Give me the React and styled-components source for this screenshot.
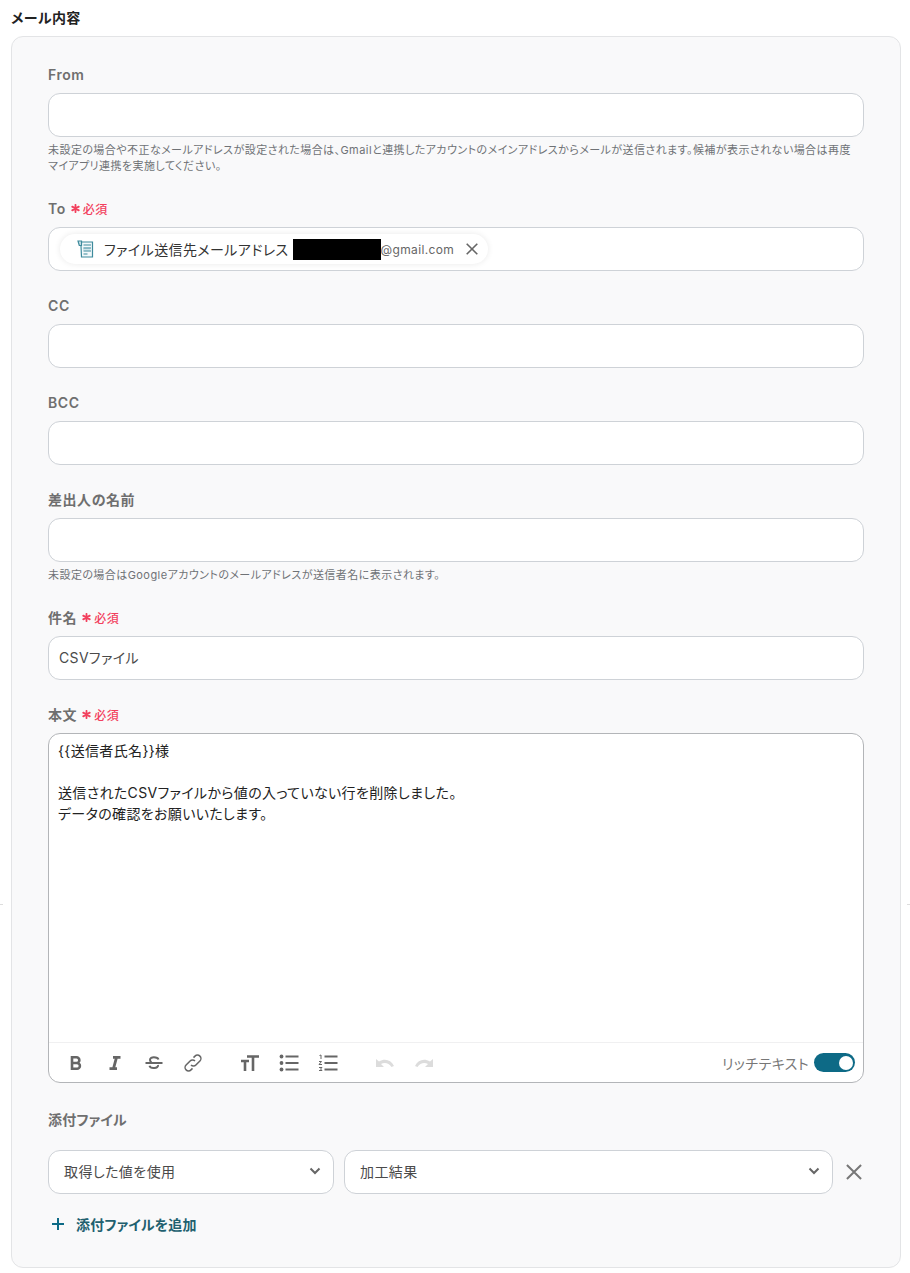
import React from "react";
import styled, { createGlobalStyle } from "styled-components";

const Global = createGlobalStyle`
  html, body { margin: 0; padding: 0; background: #fff; }
  body {
    font-family: Inter, "Noto Sans CJK JP", sans-serif;
    font-feature-settings: "palt";
    letter-spacing: 0.04em;
    color: #333;
  }
`;
const Page = styled.div`
  position: relative;
  width: 910px;
  height: 1273px;
  box-sizing: border-box;
  padding: 9px 9px 0 11px;
  overflow: hidden;
`;
const Tick = styled.i`
  position: absolute;
  top: 904px;
  ${(p) => (p.$right ? "right: 0;" : "left: 0;")}
  width: 3px;
  height: 1px;
  background: #ddd;
`;
const Title = styled.h2`
  margin: 0 0 9px;
  font-size: 14px;
  line-height: 18px;
  font-weight: 700;
  letter-spacing: 0.03em;
  color: #222;
`;
const Card = styled.section`
  box-sizing: border-box;
  height: 1232px;
  padding: 28px 36px 0;
  background: #f9f9fa;
  border: 1px solid #e3e4e6;
  border-radius: 12px;
`;
const Field = styled.div`
  margin-bottom: ${(p) => p.$mb ?? 25}px;
`;
const Label = styled.div`
  display: flex;
  align-items: center;
  height: 18px;
  margin-bottom: ${(p) => p.$mb ?? 10}px;
  font-size: 14px;
  font-weight: 600;
  letter-spacing: ${(p) => p.$ls ?? "0.04em"};
  color: #6f6f6f;
`;
const Star = styled.span`
  margin-left: 5px;
  color: #f2405d;
  display: inline-flex;
`;
const Req = styled.span`
  margin-left: 3px;
  color: #f2405d;
  font-size: 12px;
  font-weight: 500;
`;
const Input = styled.div`
  box-sizing: border-box;
  display: flex;
  align-items: center;
  height: 44px;
  padding: 0 10px ${(p) => (p.$text ? 3 : 0)}px;
  background: #fff;
  border: 1px solid #ced2d7;
  border-radius: 12px;
  font-size: 14px;
  letter-spacing: 0.025em;
  color: #4a4a4a;
`;
const Hint = styled.p`
  margin: 5px 0 0;
  font-size: 11px;
  line-height: 16px;
  letter-spacing: 0.04em;
  white-space: nowrap;
  color: #6f7276;
`;
const Chip = styled.div`
  display: flex;
  align-items: center;
  height: 30px;
  padding: 0 10px 0 17px;
  margin-left: 1px;
  border-radius: 15px;
  background: #fff;
  box-shadow: 0 0 6px rgba(0, 0, 0, 0.09);
  font-size: 14px;
  letter-spacing: 0.03em;
  color: #333;
`;
const ChipText = styled.span`
  margin-left: 10px;
`;
const Redact = styled.span`
  display: block;
  width: 88px;
  height: 21px;
  margin-left: 4px;
  background: #000;
`;
const Mail = styled.span`
  font-size: 12px;
  letter-spacing: 0.03em;
  color: #666;
`;
const ChipClose = styled.span`
  display: inline-flex;
  margin-left: 12px;
  color: #666;
`;
const Editor = styled.div`
  box-sizing: border-box;
  display: flex;
  flex-direction: column;
  height: 350px;
  background: #fff;
  border: 1px solid #b3b5b8;
  border-radius: 12px;
`;
const Body = styled.div`
  flex: 1;
  padding: 6px 9px;
  font-size: 14px;
  line-height: 21px;
  letter-spacing: 0.025em;
  color: #222;
  white-space: pre-line;
`;
const Toolbar = styled.div`
  display: flex;
  align-items: center;
  height: 39px;
  flex: none;
  padding: 0 8px 0 17px;
  border-top: 1px solid #f0f0f1;
`;
const Tool = styled.span`
  display: inline-flex;
  width: 20px;
  height: 20px;
  margin-right: ${(p) => p.$mr ?? 19}px;
  color: ${(p) => (p.$off ? "#dcdcdc" : "#666")};
`;
const RichLabel = styled.span`
  margin-left: auto;
  margin-right: 5px;
  font-size: 14px;
  letter-spacing: 0.03em;
  color: #777;
`;
const Toggle = styled.span`
  box-sizing: border-box;
  display: flex;
  justify-content: flex-end;
  align-items: center;
  width: 41px;
  height: 19px;
  padding: 2px;
  border-radius: 10px;
  background: #0d6a86;
`;
const Knob = styled.span`
  width: 14px;
  height: 14px;
  border-radius: 50%;
  background: #fff;
`;
const Row = styled.div`
  display: flex;
  align-items: center;
  gap: 10px;
  margin-top: 22px;
`;
const Select = styled.div`
  box-sizing: border-box;
  display: flex;
  align-items: center;
  justify-content: space-between;
  width: ${(p) => p.$w}px;
  height: 44px;
  padding: 0 12px 2px 15px;
  background: #fff;
  border: 1px solid #ced2d7;
  border-radius: 12px;
  font-size: 14px;
  letter-spacing: 0.03em;
  color: #4a4a4a;
`;
const Remove = styled.span`
  display: inline-flex;
  margin-left: 3px;
  color: #777;
`;
const Add = styled.div`
  display: flex;
  align-items: center;
  margin-top: 20px;
  padding-left: 3px;
  font-size: 14px;
  font-weight: 700;
  letter-spacing: 0.01em;
  color: #21606f;
`;
const AddIcon = styled.span`
  display: inline-flex;
  margin-right: 11px;
`;

const Required = () => (
  <>
    <Star>
      <svg width="9" height="9" viewBox="0 0 11 11" stroke="currentColor" strokeWidth="2.2" strokeLinecap="round">
        <path d="M5.5 1v9M1.5 3.2l8 4.6M9.5 3.2l-8 4.6" />
      </svg>
    </Star>
    <Req>必須</Req>
  </>
);
const X = ({ s = 12, w = 1.6 }) => (
  <svg width={s} height={s} viewBox="0 0 12 12" fill="none" stroke="currentColor" strokeWidth={w}>
    <path d="M.7.7l10.6 10.6M11.3.7L.7 11.3" />
  </svg>
);
const Chevron = () => (
  <svg width="12" height="8" viewBox="0 0 12 8" fill="none" stroke="#666" strokeWidth="2">
    <path d="M1.5 1.5L6 6l4.5-4.5" />
  </svg>
);
const Sheet = () => (
  <svg width="17" height="18" viewBox="0 0 17 18" fill="none" stroke="#3d8a9c" strokeWidth="1.2">
    <path d="M4 2h11.500v15H4.500L4 6" fill="#f2f8fa" />
    <path d="M1 1h3.500v4.500H2.300z" fill="#cfe4ea" />
    <path d="M6 7.500h7.500v3H6z" fill="#cfe4ea" stroke="none" />
    <path d="M6.500 5h7.500M6.500 8h7.500M6.500 11h7.500M6.500 14h4" />
  </svg>
);
const Icon = ({ children }) => (
  <svg width="20" height="20" viewBox="0 0 20 20" fill="none" stroke="currentColor" strokeWidth="2">
    {children}
  </svg>
);

export default function App() {
  return (
    <Page>
      <Global />
      <Tick />
      <Tick $right />
      <Title>メール内容</Title>
      <Card>
        <Field>
          <Label>From</Label>
          <Input />
          <Hint>
            未設定の場合や不正なメールアドレスが設定された場合は、Gmailと連携したアカウントのメインアドレスからメールが送信されます。候補が表示されない場合は再度
            <br />
            マイアプリ連携を実施してください。
          </Hint>
        </Field>
        <Field>
          <Label>
            To
            <Required />
          </Label>
          <Input>
            <Chip>
              <Sheet />
              <ChipText>ファイル送信先メールアドレス</ChipText>
              <Redact />
              <Mail>@gmail.com</Mail>
              <ChipClose>
                <X />
              </ChipClose>
            </Chip>
          </Input>
        </Field>
        <Field>
          <Label>CC</Label>
          <Input />
        </Field>
        <Field>
          <Label>BCC</Label>
          <Input />
        </Field>
        <Field>
          <Label>差出人の名前</Label>
          <Input />
          <Hint>未設定の場合はGoogleアカウントのメールアドレスが送信者名に表示されます。</Hint>
        </Field>
        <Field>
          <Label>
            件名
            <Required />
          </Label>
          <Input $text>CSVファイル</Input>
        </Field>
        <Field $mb={27}>
          <Label>
            本文
            <Required />
          </Label>
          <Editor>
            <Body>{"{{送信者氏名}}様\n\n送信されたCSVファイルから値の入っていない行を削除しました。\nデータの確認をお願いいたします。"}</Body>
            <Toolbar>
              <Tool>
                <Icon><path strokeWidth="2.6" d="M6 4.300h4.500a2.800 2.800 0 010 5.700H6zM6 10h5a2.900 2.900 0 010 5.800H6zM6 3v14" /></Icon>
              </Tool>
              <Tool>
                <Icon><path strokeWidth="2.8" d="M8 4.300h7.500M4.500 15.700H12M11.500 4.300l-3 11.400" /></Icon>
              </Tool>
              <Tool>
                <Icon><path strokeWidth="2" d="M1.500 10h17M14.500 6.500C13.500 3.800 6 3.200 6 7c0 1 .6 1.700 1.500 2.200M14 12c.8 3.500-7.500 4.300-8.500.8" /></Icon>
              </Tool>
              <Tool $mr={37}>
                <Icon><path strokeWidth="1.5" d="M8 12a3.400 3.400 0 004.900 0l4-4a3.400 3.400 0 00-4.900-4.900l-1.500 1.500M12 8a3.400 3.400 0 00-4.900 0l-4 4a3.400 3.400 0 004.900 4.900l1.500-1.500" /></Icon>
              </Tool>
              <Tool>
                <Icon><path strokeWidth="2.6" d="M7 3.500h12M13 3.500V18M1 8h8M5 8v10" /></Icon>
              </Tool>
              <Tool>
                <Icon>
                  <path d="M6.500 3.500h13M6.500 10h13M6.500 16.500h13" />
                  <circle cx="2.500" cy="3.500" r="1.900" fill="currentColor" stroke="none" />
                  <circle cx="2.500" cy="10" r="1.900" fill="currentColor" stroke="none" />
                  <circle cx="2.500" cy="16.500" r="1.900" fill="currentColor" stroke="none" />
                </Icon>
              </Tool>
              <Tool $mr={37}>
                <Icon>
                  <path d="M6.500 3.500h13M6.500 10h13M6.500 16.500h13" />
                  <path strokeWidth="1" d="M1.500 2.500L3 2v4M1 8.500h2.500L1 11.500h3M1 14.500h3L2.500 16 4 17.500H1" />
                </Icon>
              </Tool>
              <Tool $off>
                <svg width="20" height="20" viewBox="0 0 20 20" fill="currentColor">
                  <path d="M1 6v8h8l-3-3c3.500-2 8-1 10.500 3l2.500-1C16 7 10 5 4 8.500z" />
                </svg>
              </Tool>
              <Tool $off>
                <svg width="20" height="20" viewBox="0 0 20 20" fill="currentColor">
                  <path d="M19 6v8h-8l3-3c-3.500-2-8-1-10.500 3L1 13C4 7 10 5 16 8.500z" />
                </svg>
              </Tool>
              <RichLabel>リッチテキスト</RichLabel>
              <Toggle>
                <Knob />
              </Toggle>
            </Toolbar>
          </Editor>
        </Field>
        <Label $ls="0.01em">添付ファイル</Label>
        <Row>
          <Select $w={286}>
            取得した値を使用
            <Chevron />
          </Select>
          <Select $w={489}>
            加工結果
            <Chevron />
          </Select>
          <Remove>
            <X s={16} w={1.5} />
          </Remove>
        </Row>
        <Add>
          <AddIcon>
            <svg width="14" height="14" viewBox="0 0 14 14" stroke="#0d6a86" strokeWidth="2">
              <path d="M7 1v12M1 7h12" />
            </svg>
          </AddIcon>
          添付ファイルを追加
        </Add>
      </Card>
    </Page>
  );
}
